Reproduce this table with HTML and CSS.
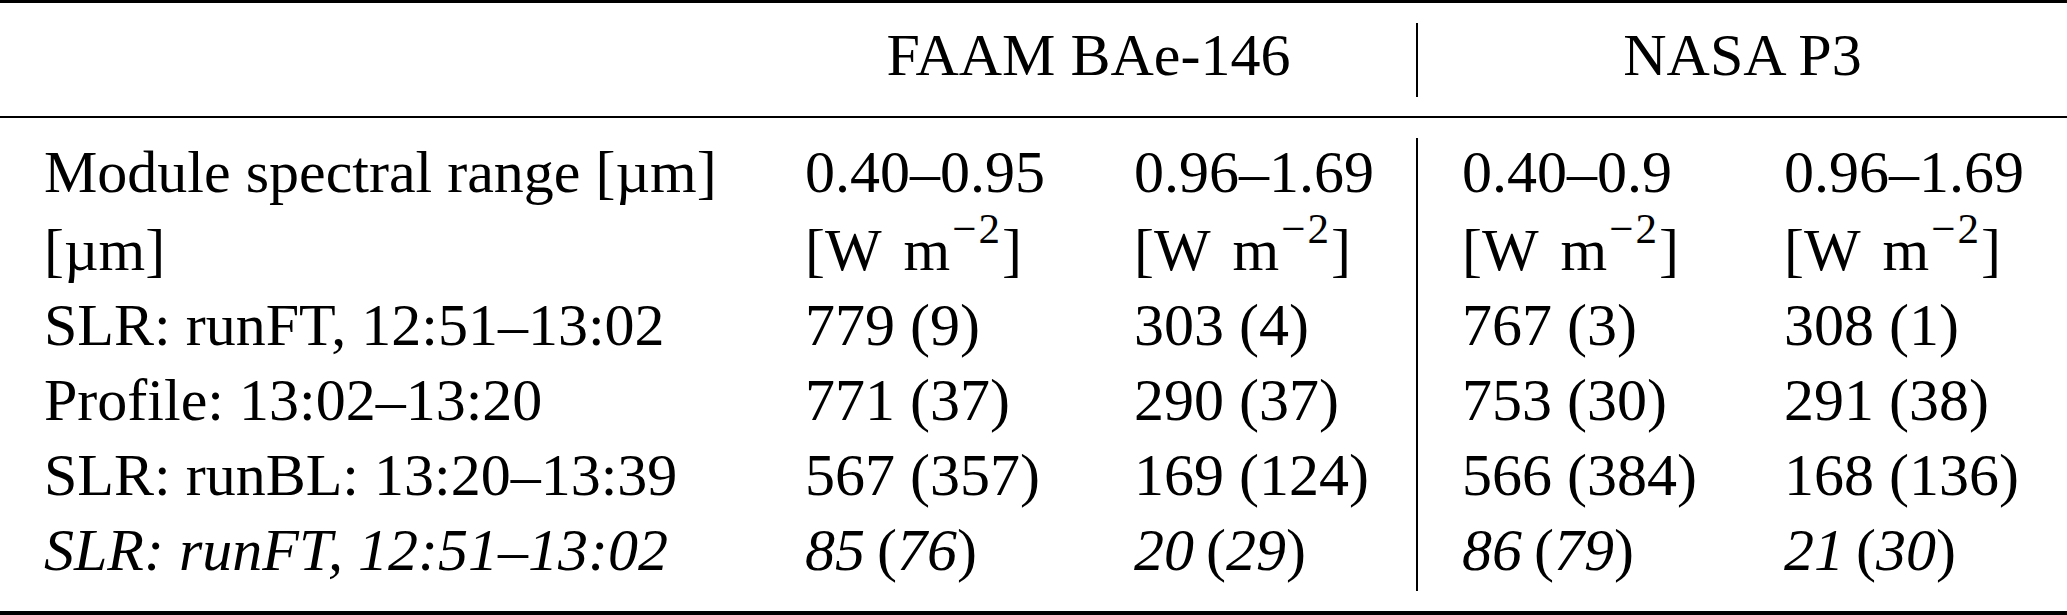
FILE: index.html
```html
<!DOCTYPE html>
<html lang="en">
<head>
    <meta charset="UTF-8">
    <meta name="viewport" content="width=device-width, initial-scale=1.0">
    <title>Irradiance table</title>
    <link rel="stylesheet" href="styles.css">
</head>
<body>
    <table class="tbl">
        <colgroup>
            <col class="c1">
            <col class="c2">
            <col class="c3">
            <col class="c4">
            <col class="c5">
        </colgroup>
        <thead>
            <tr class="gap"><td colspan="5"></td></tr>
            <tr class="head">
                <th></th>
                <th colspan="2">FAAM BAe-146</th>
                <th colspan="2" class="sep">NASA P3</th>
            </tr>
            <tr class="gap mid"><td colspan="5"></td></tr>
        </thead>
        <tbody>
            <tr class="gap"><td colspan="5"></td></tr>
            <tr>
                <td>Module spectral range [µm]</td>
                <td>0.40–0.95</td>
                <td>0.96–1.69</td>
                <td class="sep">0.40–0.9</td>
                <td>0.96–1.69</td>
            </tr>
            <tr class="units">
                <td>[µm]</td>
                <td>[W <span class="m">m</span><sup>−2</sup>]</td>
                <td>[W <span class="m">m</span><sup>−2</sup>]</td>
                <td class="sep">[W <span class="m">m</span><sup>−2</sup>]</td>
                <td>[W <span class="m">m</span><sup>−2</sup>]</td>
            </tr>
            <tr>
                <td>SLR: runFT, 12:51–13:02</td>
                <td>779 (9)</td>
                <td>303 (4)</td>
                <td class="sep">767 (3)</td>
                <td>308 (1)</td>
            </tr>
            <tr>
                <td>Profile: 13:02–13:20</td>
                <td>771 (37)</td>
                <td>290 (37)</td>
                <td class="sep">753 (30)</td>
                <td>291 (38)</td>
            </tr>
            <tr>
                <td>SLR: runBL: 13:20–13:39</td>
                <td>567 (357)</td>
                <td>169 (124)</td>
                <td class="sep">566 (384)</td>
                <td>168 (136)</td>
            </tr>
            <tr class="diff">
                <td><i>SLR: runFT, 12:51–13:02</i></td>
                <td><i>85</i>&thinsp;(<i>76</i>)</td>
                <td><i>20</i>&thinsp;(<i>29</i>)</td>
                <td class="sep"><i>86</i>&thinsp;(<i>79</i>)</td>
                <td><i>21</i>&thinsp;(<i>30</i>)</td>
            </tr>
            <tr class="gap"><td colspan="5"></td></tr>
        </tbody>
    </table>
</body>
</html>
```

FILE: styles.css
```css
* {
    padding: 0;
    margin: 0;
}

body {
    font-family: "Liberation Serif", "Times New Roman", serif;
    font-size: 60px;
    color: #000;
    background-color: #fff;
}

.tbl {
    width: 2067px;
    table-layout: fixed;
    border-collapse: separate;
    border-spacing: 0;
    border-top: 3px solid #000;
    border-bottom: 4px solid #000;
}

.c1 { width: 761px; }
.c2 { width: 329px; }
.c3 { width: 326px; }
.c4 { width: 324px; }
.c5 { width: 327px; }

.tbl td {
    height: 68px;
    padding: 0 0 7px 44px;
    line-height: 68px;
    white-space: nowrap;
    text-align: left;
}

.tbl th {
    height: 64px;
    padding: 0 0 10px 0;
    line-height: 64px;
    font-weight: normal;
    text-align: center;
    white-space: nowrap;
}

.tbl .gap td {
    height: 20px;
    padding: 0;
    line-height: 0;
}

.tbl .mid td {
    height: 19px;
    border-bottom: 2px solid #000;
}

.tbl .sep {
    border-left: 2px solid #000;
}

.tbl .units td {
    padding-top: 3px;
}

.m {
    margin-left: 8px;
}

sup {
    font-size: 43px;
    line-height: 0;
    vertical-align: 27px;
    letter-spacing: 2px;
    margin-left: 2px;
}
```
